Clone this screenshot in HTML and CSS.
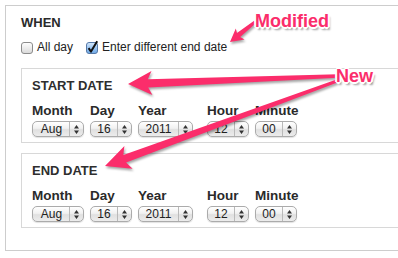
FILE: index.html
```html
<!DOCTYPE html>
<html>
<head>
<meta charset="utf-8">
<link rel="stylesheet" href="styles.css">
</head>
<body>
<div class="panel">
  <div class="when">WHEN</div>
  <div class="checks">
    <label class="check">
      <svg class="cb" width="12" height="12" viewBox="0 0 12 12"><defs><linearGradient id="gu" x1="0" y1="0" x2="0" y2="1"><stop offset="0" stop-color="#ffffff"/><stop offset="1" stop-color="#d9d9d9"/></linearGradient></defs><rect x="0.5" y="0.5" width="11" height="11" rx="2.5" fill="url(#gu)" stroke="#8c8c8c"/></svg>
      <span>All day</span>
    </label>
    <label class="check">
      <svg class="cb" width="12" height="12" viewBox="0 0 12 12"><defs><linearGradient id="gc" x1="0" y1="0" x2="0" y2="1"><stop offset="0" stop-color="#d8eafc"/><stop offset="0.5" stop-color="#9cc6f2"/><stop offset="1" stop-color="#6fa9e6"/></linearGradient></defs><rect x="0.5" y="0.5" width="11" height="11" rx="2.5" fill="url(#gc)" stroke="#5679a8"/><path d="M2.6 6.2 L5 9.6 L11.2 -0.8" fill="none" stroke="#111" stroke-width="2" stroke-linejoin="round"/></svg>
      <span>Enter different end date</span>
    </label>
  </div>

  <div class="datebox">
    <div class="heading">START DATE</div>
    <div class="fields">
      <div class="field f-month"><div class="lbl">Month</div><div class="sel"><span class="val">Aug</span><span class="arr"><svg width="5" height="9" viewBox="0 0 5 9"><path d="M2.5 0 L5 3.5 L0 3.5Z M2.5 9 L5 5.5 L0 5.5Z" fill="#333"/></svg></span></div></div>
      <div class="field f-day"><div class="lbl">Day</div><div class="sel"><span class="val">16</span><span class="arr"><svg width="5" height="9" viewBox="0 0 5 9"><path d="M2.5 0 L5 3.5 L0 3.5Z M2.5 9 L5 5.5 L0 5.5Z" fill="#333"/></svg></span></div></div>
      <div class="field f-year"><div class="lbl">Year</div><div class="sel"><span class="val">2011</span><span class="arr"><svg width="5" height="9" viewBox="0 0 5 9"><path d="M2.5 0 L5 3.5 L0 3.5Z M2.5 9 L5 5.5 L0 5.5Z" fill="#333"/></svg></span></div></div>
      <div class="field f-hour"><div class="lbl">Hour</div><div class="sel"><span class="val">12</span><span class="arr"><svg width="5" height="9" viewBox="0 0 5 9"><path d="M2.5 0 L5 3.5 L0 3.5Z M2.5 9 L5 5.5 L0 5.5Z" fill="#333"/></svg></span></div></div>
      <div class="field f-min"><div class="lbl">Minute</div><div class="sel"><span class="val">00</span><span class="arr"><svg width="5" height="9" viewBox="0 0 5 9"><path d="M2.5 0 L5 3.5 L0 3.5Z M2.5 9 L5 5.5 L0 5.5Z" fill="#333"/></svg></span></div></div>
    </div>
  </div>

  <div class="datebox">
    <div class="heading">END DATE</div>
    <div class="fields">
      <div class="field f-month"><div class="lbl">Month</div><div class="sel"><span class="val">Aug</span><span class="arr"><svg width="5" height="9" viewBox="0 0 5 9"><path d="M2.5 0 L5 3.5 L0 3.5Z M2.5 9 L5 5.5 L0 5.5Z" fill="#333"/></svg></span></div></div>
      <div class="field f-day"><div class="lbl">Day</div><div class="sel"><span class="val">16</span><span class="arr"><svg width="5" height="9" viewBox="0 0 5 9"><path d="M2.5 0 L5 3.5 L0 3.5Z M2.5 9 L5 5.5 L0 5.5Z" fill="#333"/></svg></span></div></div>
      <div class="field f-year"><div class="lbl">Year</div><div class="sel"><span class="val">2011</span><span class="arr"><svg width="5" height="9" viewBox="0 0 5 9"><path d="M2.5 0 L5 3.5 L0 3.5Z M2.5 9 L5 5.5 L0 5.5Z" fill="#333"/></svg></span></div></div>
      <div class="field f-hour"><div class="lbl">Hour</div><div class="sel"><span class="val">12</span><span class="arr"><svg width="5" height="9" viewBox="0 0 5 9"><path d="M2.5 0 L5 3.5 L0 3.5Z M2.5 9 L5 5.5 L0 5.5Z" fill="#333"/></svg></span></div></div>
      <div class="field f-min"><div class="lbl">Minute</div><div class="sel"><span class="val">00</span><span class="arr"><svg width="5" height="9" viewBox="0 0 5 9"><path d="M2.5 0 L5 3.5 L0 3.5Z M2.5 9 L5 5.5 L0 5.5Z" fill="#333"/></svg></span></div></div>
    </div>
  </div>
</div>

<svg class="arrows" width="398" height="258" viewBox="0 0 398 258">
  <g fill="#fb2d6b">
    <polygon points="128,84 151.5,71.1 147.8,79.2 337.9,74.3 338.1,77.7 148.2,87.6 152.4,95.1"/>
    <polygon points="105,166 124.4,146.1 123.3,155 336.5,79.6 337.5,82.4 126.1,162.6 132.6,168.7"/>
    <polygon points="230,42 235.8,28.4 237,33.1 254.1,20.8 255.9,23.2 240.2,37.1 244.6,39.4"/>
  </g>
</svg>
<div class="note note-mod">Modified</div>
<div class="note note-new">New</div>
</body>
</html>
```

FILE: styles.css
```css
html, body {
  margin: 0;
  padding: 0;
  overflow: hidden;
  background: #ffffff;
}
body {
  width: 398px;
  height: 258px;
  font-family: "Liberation Sans", Arial, Helvetica, sans-serif;
  color: #222;
}
.panel {
  margin: 5px 0 0 5px;
  box-sizing: border-box;
  width: 393px;
  border: 1px solid #cdcdcd;
  border-right: none;
  padding: 9px 0 22px 15px;
}
.when {
  font-size: 13px;
  line-height: 15px;
  font-weight: bold;
  color: #2a2a2a;
}
.checks {
  margin-top: 10px;
  display: flex;
  gap: 13px;
  font-size: 12px;
  line-height: 15px;
}
.check {
  display: flex;
  align-items: center;
  gap: 4px;
}
.cb {
  display: block;
  overflow: visible;
}
.datebox {
  margin-top: 13px;
  border: 1px solid #d8d8d8;
  border-right: none;
  padding: 9px 0 5px 10px;
}
.datebox + .datebox {
  margin-top: 10px;
}
.heading {
  font-size: 13px;
  line-height: 15px;
  font-weight: bold;
  color: #2e2e2e;
}
.fields {
  margin-top: 10px;
  display: flex;
  gap: 6px;
}
.lbl {
  font-size: 13.5px;
  line-height: 16px;
  font-weight: bold;
  color: #2a2a2a;
  white-space: nowrap;
}
.sel {
  margin-top: 2px;
  height: 16px;
  box-sizing: border-box;
  display: flex;
  border: 1px solid #ababab;
  border-radius: 5px;
  background: linear-gradient(#ffffff, #f1f1f1 45%, #e0e0e0 55%, #ececec);
  box-shadow: 0 1px 1px rgba(0,0,0,0.12);
  font-size: 12px;
  line-height: 14px;
  color: #222;
}
.val {
  flex: 1;
  text-align: center;
}
.arr {
  width: 13px;
  border-left: 1px solid #b9b9b9;
  display: flex;
  align-items: center;
  justify-content: center;
}
.arr svg {
  display: block;
}
.f-month .sel { width: 52px; }
.f-day .sel { width: 42px; }
.f-year .sel { width: 55px; }
.f-hour { margin-left: 8px; }
.f-hour .sel { width: 42px; }
.f-min .sel { width: 42px; }
.f-month .val { padding-left: 1px; }

.arrows {
  position: absolute;
  left: 0;
  top: 0;
  pointer-events: none;
  filter: drop-shadow(1px 2px 1.2px rgba(0,0,0,0.35));
}
.note {
  position: absolute;
  font-size: 18px;
  line-height: 20px;
  font-weight: bold;
  color: #fb2d6b;
  white-space: nowrap;
  text-shadow:
    1px 0 0 #fff, -1px 0 0 #fff, 0 1px 0 #fff, 0 -1px 0 #fff,
    1px 1px 0 #fff, -1px -1px 0 #fff, 1px -1px 0 #fff, -1px 1px 0 #fff,
    2px 0 0 #fff, -2px 0 0 #fff, 0 2px 0 #fff, 0 -2px 0 #fff,
    2px 3px 2px rgba(0,0,0,0.4);
}
.note-mod {
  left: 255px;
  top: 11px;
}
.note-new {
  left: 336px;
  top: 66px;
}
```
